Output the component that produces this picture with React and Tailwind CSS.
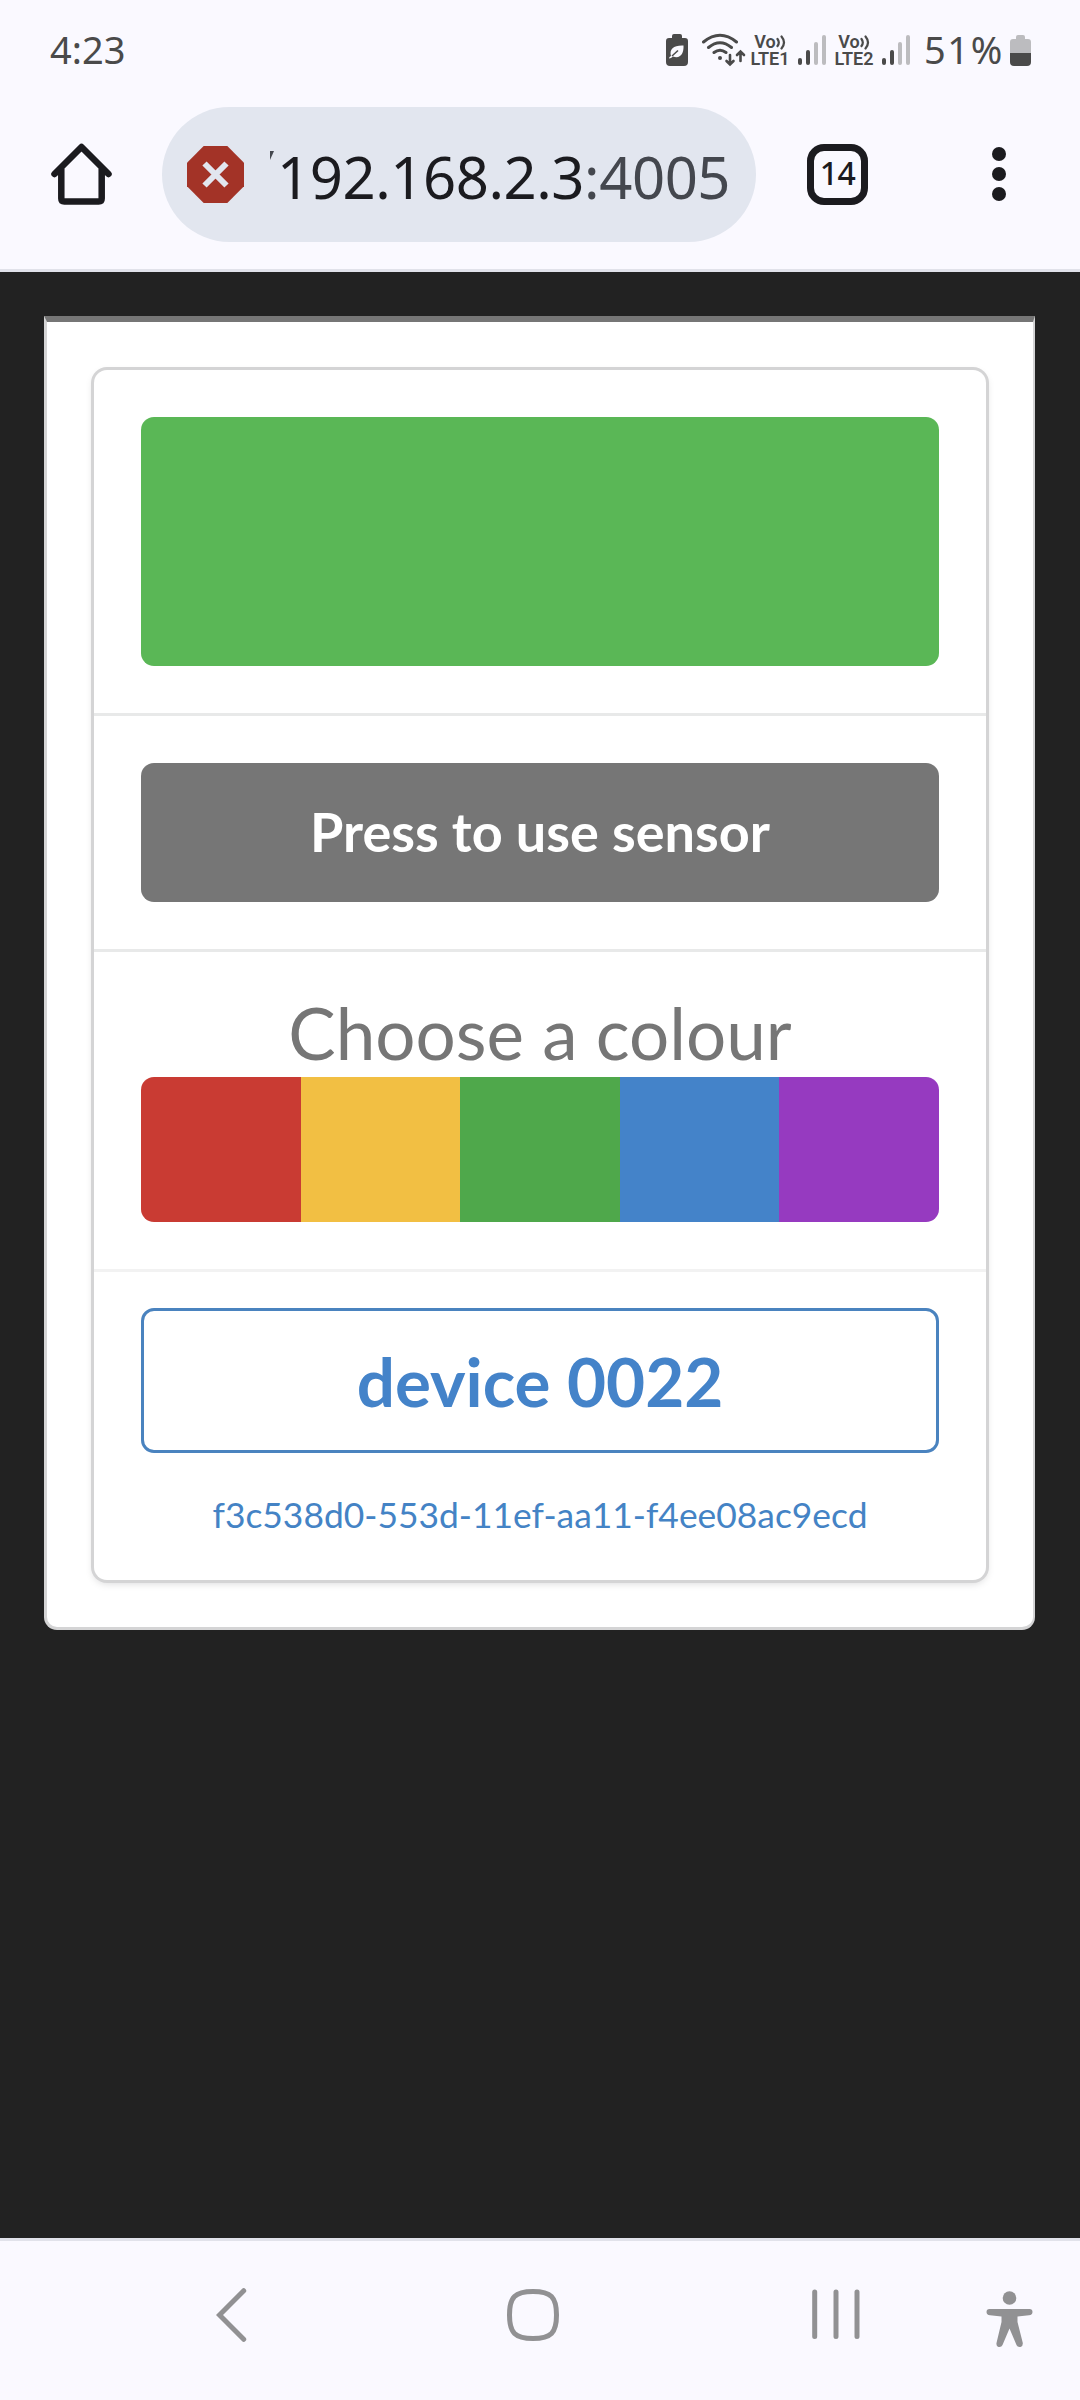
const swatches = [
  { name: 'red', className: 'bg-[#c93b33]' },
  { name: 'yellow', className: 'bg-[#f2bf43]' },
  { name: 'green', className: 'bg-[#4fa84b]' },
  { name: 'blue', className: 'bg-[#4483c9]' },
  { name: 'purple', className: 'bg-[#963ac0]' },
];

function Signal() {
  return (
    <div className="flex h-[30px] w-7 items-end gap-1">
      <div className="h-[7px] w-1 rounded-full bg-[#4a4a4a]" />
      <div className="h-[15px] w-1 rounded-full bg-[#4a4a4a]" />
      <div className="h-[23px] w-1 rounded-full bg-[#bcbcbf]" />
      <div className="h-[30px] w-1 rounded-full bg-[#bcbcbf]" />
    </div>
  );
}

function VoLte({ n }) {
  return (
    <div className="flex w-[38px] flex-col items-center whitespace-nowrap font-['Roboto',sans-serif] text-[18px] leading-[17px] font-semibold text-[#4a4a4a]">
      <span className="flex items-center">
        Vo
        <svg width="10" height="16" viewBox="0 0 10 16" fill="none" stroke="#4a4a4a" strokeWidth="2.2" strokeLinecap="round">
          <path d="M1.5 5q2.600 3.500 0 7M5.500 2.500q5 6 0 12" />
        </svg>
      </span>
      <span>LTE{n}</span>
    </div>
  );
}

function StatusBar() {
  return (
    <div className="flex h-[100px] items-center pl-[50px] pr-[49px] font-['Noto_Sans',sans-serif] text-[38px] leading-none text-[#4a4a4a]">
      <span className="-mt-[3px]">4:23</span>
      <div className="ml-auto flex items-center">
        <svg width="22" height="32" viewBox="0 0 22 32">
          <path fill="#4a4a4a" d="M6 2q0-2 2-2h6q2 0 2 2v2h3q3 0 3 3v21q0 4-4 4H4q-4 0-4-4V7q0-3 3-3h3z" />
          <path fill="#faf9ff" d="M5 22C3 15 8 11 17.500 11.500C18 20 14 25 7 22.500Q5 24.500 3 24.500Q3 22.500 5 22z" />
          <path stroke="#4a4a4a" strokeWidth="1.500" d="M6 22l6-5.500" />
        </svg>
        <svg className="ml-[13px]" width="45" height="34" viewBox="0 0 45 34" fill="none" stroke="#4a4a4a" strokeWidth="3" strokeLinecap="round">
          <path d="M2.500 9Q19 -4.500 35.500 9M7.500 14.500Q19 5 30.500 14.500M13 19.500Q19 15 25 19.500" />
          <circle cx="19" cy="25" r="2" fill="#4a4a4a" stroke="none" />
          <path d="M29 22v9M25.500 28l3.500 3.500l3.500-3.500M39.500 28v-9M36 22l3.500-3.500L43 22" strokeWidth="2.600" />
        </svg>
        <div className="ml-[5px]"><VoLte n={1} /></div>
        <div className="ml-[9px]"><Signal /></div>
        <div className="ml-[9px]"><VoLte n={2} /></div>
        <div className="ml-[9px]"><Signal /></div>
        <span className="ml-[14px] -mt-[3px] w-20 tracking-[1.6px]">51%</span>
        <svg className="ml-[6px]" width="21" height="31" viewBox="0 0 21 31">
          <path fill="#bcbcbf" d="M6 2q0-2 2-2h5q2 0 2 2v2h3q3 0 3 3v11H0V7q0-3 3-3h3z" />
          <path fill="#4a4a4a" d="M0 18h21v9q0 4-4 4H4q-4 0-4-4z" />
        </svg>
      </div>
    </div>
  );
}

function Toolbar() {
  return (
    <div className="flex h-[169px] items-start pt-[7px]">
      <svg className="ml-[51px] mt-9" width="61" height="62" viewBox="0 0 61 62" fill="none" stroke="#1b1b1f" strokeWidth="6.500" strokeLinecap="round" strokeLinejoin="round">
        <path d="M3.500 31L30.500 4L57.500 31M10.300 26V55.500Q10.300 58.500 13.300 58.500H47.700Q50.700 58.500 50.700 55.500V26" />
      </svg>
      <div className="ml-[50px] flex h-[135px] w-[594px] items-center rounded-full bg-[#e2e6ef] pl-[25px]">
        <svg className="-mt-[1px]" width="57" height="57" viewBox="0 0 57 57">
          <path fill="#a33327" d="M16.700 0H40.300L57 16.700V40.300L40.300 57H16.700L0 40.300V16.700z" />
          <path stroke="#e2e6ef" strokeWidth="6" d="M17.500 17.500L39.500 39.500M39.500 17.500L17.500 39.500" />
        </svg>
        <svg className="ml-[26px] -mt-[38px]" width="4" height="9" viewBox="0 0 4 9">
          <path fill="#44474e" d="M0 0H4L0 9z" />
        </svg>
        <span className="ml-[3px] mt-[4px] whitespace-nowrap font-['Noto_Sans',sans-serif] text-[58px] leading-none tracking-[-0.45px] text-[#1b1b1f]">
          192.168.2.3<span className="text-[#44474e]">:4005</span>
        </span>
      </div>
      <div className="ml-[51px] mt-[37px] flex h-[61px] w-[61px] items-center justify-center rounded-[17px] border-[7px] border-[#1b1b1f] font-['Noto_Sans',sans-serif] text-[32px] leading-none font-medium text-[#1b1b1f]">
        <span className="-mt-[3px] tracking-[-0.5px]">14</span>
      </div>
      <div className="ml-[124px] mt-[40px] flex flex-col gap-[6px]">
        <div className="size-[14px] rounded-full bg-[#1b1b1f]" />
        <div className="size-[14px] rounded-full bg-[#1b1b1f]" />
        <div className="size-[14px] rounded-full bg-[#1b1b1f]" />
      </div>
    </div>
  );
}

function Card() {
  return (
    <div className="flex h-[1210px] w-[892px] flex-col rounded-[13px] bg-white shadow-[0_0_0_3px_#d4d4d5,0_3px_9px_0_#d4d4d5]">
      <div className="h-[346px] border-b-[3px] border-[#e8e9e9] px-[47px] pt-[47px]">
        <div className="h-[249px] rounded-[13px] bg-[#5ab756]" />
      </div>
      <div className="h-[236px] border-b-[3px] border-[#e8e9e9] px-[47px] pt-[47px]">
        <button className="flex h-[139px] w-full items-center justify-center rounded-[13px] bg-[#767676] pb-[2px] text-[54px] leading-none font-bold text-white">
          Press to use sensor
        </button>
      </div>
      <div className="h-[320px] border-b-[3px] border-[#f2f2f2] px-[47px] pt-[45px]">
        <div className="h-[80px] text-center text-[71px] leading-[72px] text-[#767676]">Choose a colour</div>
        <div className="grid h-[145px] grid-cols-5 overflow-hidden rounded-[13px]">
          {swatches.map((s) => (
            <button key={s.name} aria-label={s.name} className={s.className} />
          ))}
        </div>
      </div>
      <div className="flex flex-col items-center px-[47px] pt-[36px] text-[#4483c5]">
        <button className="flex h-[145px] w-full items-center justify-center rounded-[13px] border-[3px] border-[#4a83bf] text-[67.4px] leading-none font-bold text-[#4483c9]">
          device 0022
        </button>
        <div className="mt-[41px] text-[35.4px] leading-[42px]">f3c538d0-553d-11ef-aa11-f4ee08ac9ecd</div>
      </div>
    </div>
  );
}

function NavBar() {
  return (
    <div className="flex h-[162px] items-start border-t-[3px] border-[#e1e2ea] bg-[#faf9ff] pt-[47px]">
      <svg className="ml-[216px]" width="32" height="54" viewBox="0 0 32 54" fill="none" stroke="#919193" strokeWidth="5" strokeLinecap="round">
        <path d="M27.700 2.700L3.500 27L27.700 51.300" />
      </svg>
      <svg className="ml-[258px]" width="54" height="54" viewBox="0 0 54 54" fill="none" stroke="#919193" strokeWidth="5">
        <path d="M27 3.500C45 3.500 50.500 9 50.500 27S45 50.500 27 50.500S3.500 45 3.500 27S9 3.500 27 3.500z" />
      </svg>
      <svg className="ml-[252px]" width="48" height="54" viewBox="0 0 48 54" fill="none" stroke="#919193" strokeWidth="5" strokeLinecap="round">
        <path d="M2.700 4V48.500M24 4V48.500M45 4V48.500" />
      </svg>
      <svg className="ml-[126px]" width="47" height="60" viewBox="0 0 47 60" fill="#919193">
        <circle cx="23.500" cy="10" r="6.800" />
        <path d="M3.500 21H43.500Q46.500 21 46.500 24Q46.500 27 43 27.300L31.500 28.500V34L36.800 55Q37 58.500 34.500 59Q31.500 59.500 30.500 57L23.500 40.500L16.500 57Q15.500 59.500 12.500 59Q10 58.500 10.500 55L15.500 34V28.500L4 27.300Q0.500 27 0.500 24Q0.500 21 3.500 21z" />
      </svg>
    </div>
  );
}

export default function App() {
  return (
    <div className="flex h-[2400px] w-[1080px] flex-col overflow-hidden bg-[#222222] font-['Lato',sans-serif]">
      <div className="h-[272px] border-b-[3px] border-[#e1e2ea] bg-[#faf9ff]">
        <StatusBar />
        <Toolbar />
      </div>
      <div className="h-[1966px] pt-[44px] pl-[44px]">
        <div className="h-[1314px] w-[991px] rounded-b-[13px] border-[3px] border-t-[6px] border-r-2 border-[#d4d4d5] border-t-[#767676] bg-white pt-12 pl-[47px]">
          <Card />
        </div>
      </div>
      <NavBar />
    </div>
  );
}
